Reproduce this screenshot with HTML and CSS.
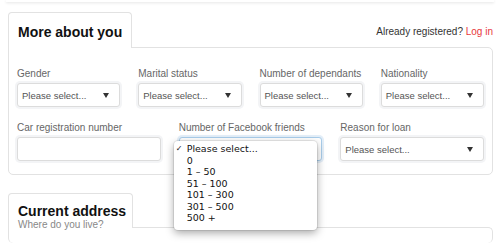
FILE: index.html
```html
<!DOCTYPE html>
<html>
<head>
<meta charset="utf-8">
<link rel="stylesheet" href="styles.css">
</head>
<body>
<div class="prev-edge"></div>

<section class="card">
  <div class="card-head">
    <div class="tab"><h2 class="tab-title">More about you</h2></div>
    <p class="login">Already registered? <a href="#" class="login-link">Log in</a></p>
  </div>
  <div class="panel">
    <div class="row row-4">
      <div class="field">
        <label class="label">Gender</label>
        <div class="select"><span class="select-text">Please select...</span><span class="arrow"></span></div>
      </div>
      <div class="field">
        <label class="label">Marital status</label>
        <div class="select"><span class="select-text">Please select...</span><span class="arrow"></span></div>
      </div>
      <div class="field">
        <label class="label">Number of dependants</label>
        <div class="select"><span class="select-text">Please select...</span><span class="arrow"></span></div>
      </div>
      <div class="field">
        <label class="label">Nationality</label>
        <div class="select"><span class="select-text">Please select...</span><span class="arrow"></span></div>
      </div>
    </div>
    <div class="row row-3">
      <div class="field">
        <label class="label">Car registration number</label>
        <div class="input"></div>
      </div>
      <div class="field">
        <label class="label">Number of Facebook friends</label>
        <div class="select-wrap">
          <div class="select select-focus"><span class="select-text"></span><span class="arrow arrow-faint"></span></div>
          <ul class="dropdown">
            <li class="opt opt-checked"><span class="check">✓</span>Please select...</li>
            <li class="opt">0</li>
            <li class="opt">1 – 50</li>
            <li class="opt">51 – 100</li>
            <li class="opt">101 – 300</li>
            <li class="opt">301 – 500</li>
            <li class="opt">500 +</li>
          </ul>
        </div>
      </div>
      <div class="field">
        <label class="label">Reason for loan</label>
        <div class="select"><span class="select-text">Please select...</span><span class="arrow"></span></div>
      </div>
    </div>
  </div>
</section>

<section class="card card-2">
  <div class="card-head">
    <div class="tab tab-2">
      <h2 class="tab-title">Current address</h2>
      <p class="tab-sub">Where do you live?</p>
    </div>
  </div>
  <div class="panel panel-2"></div>
</section>
</body>
</html>
```

FILE: styles.css
```css
* { box-sizing: border-box; }
html, body { margin: 0; padding: 0; background: #fff; }
body {
  font-family: "Liberation Sans", Arial, sans-serif;
  color: #555;
  width: 500px;
  height: 243px;
  overflow: hidden;
  position: relative;
}

.prev-edge {
  height: 2px;
  margin: 0 6px;
  background: #fff;
  box-shadow: 0 1px 3px rgba(0,0,0,0.12);
}

.card {
  margin: 10px 0 0 8px;
  width: 485px;
}
.card-2 { margin-top: 18px; }

.card-head {
  display: flex;
  align-items: flex-end;
  justify-content: space-between;
}

.tab {
  position: relative;
  z-index: 2;
  width: 124px;
  height: 36px;
  margin-bottom: -1px;
  background: #fff;
  border: 1px solid #e2e2e2;
  border-bottom: none;
  border-radius: 4px 4px 0 0;
  padding: 11px 0 0 9px;
}
.tab-title {
  margin: 0;
  font-size: 14px;
  line-height: 16px;
  font-weight: bold;
  color: #111;
}
.tab-2 { width: 125px; height: 35px; padding-top: 9px; }
.tab-sub {
  margin: 0;
  font-size: 10px;
  line-height: 11px;
  color: #888;
}

.login {
  margin: 0 0 9px;
  font-size: 10px;
  line-height: 12px;
  color: #333;
  white-space: nowrap;
}
.login-link { color: #e8383d; text-decoration: none; }

.panel {
  border: 1px solid #e2e2e2;
  border-radius: 0 5px 5px 5px;
  padding: 19px 8px 13px 8px;
}
.panel-2 { height: 16px; border-bottom: none; padding: 0; }

.row { display: grid; column-gap: 18px; }
.row-4 { grid-template-columns: repeat(4, 1fr); }
.row-3 { grid-template-columns: repeat(3, 1fr); margin-top: 14px; }

.label {
  display: block;
  font-size: 10px;
  line-height: 13px;
  color: #666;
  margin-bottom: 3px;
  white-space: nowrap;
}

.select, .input {
  height: 24px;
  border: 1px solid #dcdcdc;
  border-radius: 3px;
  background: #fff;
  box-shadow: 0 0 0 2px #f3f4f6;
}
.select {
  display: flex;
  align-items: center;
  justify-content: space-between;
  padding: 0 10px 0 4px;
}
.select-text { font-size: 9.5px; color: #555; white-space: nowrap; }
.arrow {
  width: 0;
  height: 0;
  border-left: 3px solid transparent;
  border-right: 3px solid transparent;
  border-top: 5px solid #333;
}
.arrow-faint { border-top-color: #ccc; }

.select-wrap { position: relative; }
.select-focus {
  border-color: #a9cdea;
  box-shadow: 0 0 0 2px #e3eef8;
}

.dropdown {
  position: absolute;
  z-index: 5;
  left: -5px;
  top: 4px;
  width: 143px;
  margin: 0;
  padding: 2px 0 6px;
  list-style: none;
  background: #fff;
  border-radius: 4px;
  box-shadow: 0 3px 9px rgba(0,0,0,0.35), 0 0 0 1px rgba(0,0,0,0.08);
}
.opt {
  position: relative;
  padding-left: 13px;
  font-family: "DejaVu Sans", sans-serif;
  font-size: 9.5px;
  line-height: 11.5px;
  color: #111;
}
.check {
  position: absolute;
  left: 2px;
  font-size: 8px;
}
```
